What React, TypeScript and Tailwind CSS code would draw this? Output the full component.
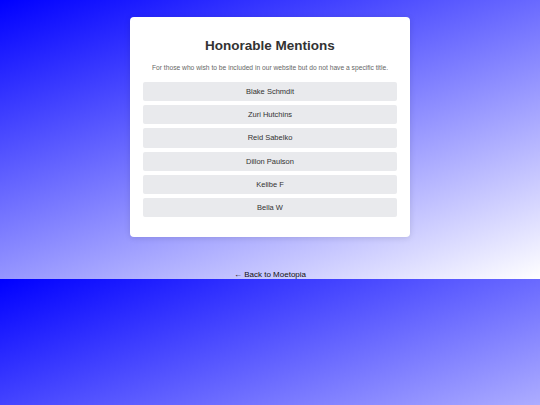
export default function App() {
  const names = ["Blake Schmdit", "Zuri Hutchins", "Reid Sabelko", "Dillon Paulson", "Kelibe F", "Bella W"];
  return (
    <div
      className="min-h-[405px] w-full bg-[linear-gradient(160deg,#0000ff_0%,#ffffff_100%)] bg-[length:100%_279px] bg-repeat-y"
      style={{ fontFamily: '"Liberation Sans", Arial, sans-serif' }}
    >
      <div className="flex flex-col items-center pt-[17px]">
        <div className="w-[280px] rounded-[4px] bg-white px-[13px] pt-[21px] pb-[20px] shadow-[0_1px_6px_rgba(0,0,0,0.12)]">
          <h1 className="text-center text-[13.5px] font-bold leading-[16px] text-[#333333]">Honorable Mentions</h1>
          <p className="mt-[10px] text-center text-[6.7px] leading-[8px] text-[#666666]">
            For those who wish to be included in our website but do not have a specific title.
          </p>
          <ul className="mt-[10px] flex flex-col gap-[4px]">
            {names.map((n) => (
              <li
                key={n}
                className="flex h-[19.2px] items-center justify-center rounded-[2px] bg-[#e9eaed] text-[7.5px] text-[#333333]"
              >
                {n}
              </li>
            ))}
          </ul>
        </div>
        <a className="mt-[33px] block h-[9px] text-[8px] leading-[9px] text-[#111111]">← Back to Moetopia</a>
      </div>
    </div>
  );
}
